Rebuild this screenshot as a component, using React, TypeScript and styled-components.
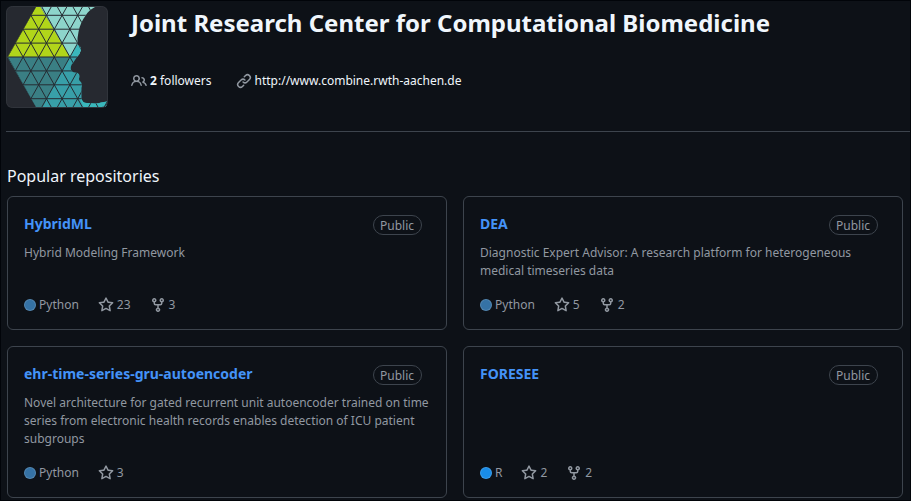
import React from "react";
import styled, { createGlobalStyle } from "styled-components";

const GlobalStyle = createGlobalStyle`
  *, *::before, *::after { box-sizing: border-box; }
  html { background: #0d1117; }
  body {
    margin: 0;
    background: #0d1117;
    color: #f0f6fc;
    font: 12px/18px "Noto Sans", sans-serif;
  }
`;

const Page = styled.main`
  min-height: 100vh;
  border: 1px solid #010409;
`;

const Header = styled.header`
  display: flex;
  gap: 23px;
  margin-left: 5px;
  padding: 5px 0 23px;
  border-bottom: 1px solid #3d444d;
`;

const Avatar = styled.svg`
  flex: none;
  width: 102px;
  height: 102px;
  border-radius: 6px;
`;

const Identity = styled.div`
  display: flex;
  flex-direction: column;
  gap: 32px;
`;

const OrgName = styled.h1`
  margin: 0;
  font-size: 24px;
  line-height: 34px;
  font-weight: 700;
`;

const MetaList = styled.ul`
  display: flex;
  gap: 24px;
  margin: 0;
  padding: 0;
  list-style: none;
`;

const MetaLink = styled.a`
  display: flex;
  align-items: center;
  gap: 3px;
  color: inherit;
  text-decoration: none;
`;

const Icon = styled.svg`
  flex: none;
  width: 16px;
  height: 16px;
  fill: #9198a1;
`;

const Popular = styled.section`
  padding: 32px 7px 0 6px;
`;

const SectionTitle = styled.h2`
  margin: 0 0 8px;
  font-size: 16px;
  line-height: 24px;
  font-weight: 400;
`;

const RepoGrid = styled.div`
  display: grid;
  grid-template-columns: repeat(2, minmax(0, 1fr));
  gap: 16px;
`;

const Card = styled.article`
  display: flex;
  flex-direction: column;
  padding: 16px 16px 15px;
  border: 1px solid #3d444d;
  border-radius: 6px;
`;

const CardHead = styled.div`
  display: flex;
  justify-content: space-between;
  align-items: flex-start;
  padding-right: 8px;
`;

const RepoLink = styled.a`
  color: #4493f8;
  font-size: 14px;
  line-height: 22px;
  font-weight: 700;
  text-decoration: none;
`;

const Visibility = styled.span`
  margin-top: 2px;
  padding: 1px 7px 0 6px;
  border: 1px solid #3d444d;
  border-radius: 10px;
  color: #9198a1;
  line-height: 17px;
`;

const Description = styled.p`
  flex: 1;
  margin: 9px 0 16px;
  color: #9198a1;
`;

const Stats = styled.div`
  display: flex;
  gap: 19px;
  color: #9198a1;
`;

const Stat = styled.a`
  display: flex;
  align-items: center;
  gap: 3px;
  color: inherit;
  text-decoration: none;
`;

const Language = styled.span`
  display: flex;
  align-items: center;
  gap: 3px;
`;

const Dot = styled.span<{ $color: string }>`
  width: 12px;
  height: 12px;
  border: 1px solid rgba(255, 255, 255, 0.15);
  border-radius: 50%;
  background: ${(p) => p.$color};
`;

const paths = {
  people:
    "M2 5.5a3.5 3.5 0 1 1 5.898 2.549 5.508 5.508 0 0 1 3.034 4.084.75.75 0 1 1-1.482.235 4 4 0 0 0-7.9 0 .75.75 0 0 1-1.482-.236A5.507 5.507 0 0 1 3.102 8.05 3.493 3.493 0 0 1 2 5.5ZM11 4a3.001 3.001 0 0 1 2.22 5.018 5.01 5.01 0 0 1 2.56 3.012.749.749 0 0 1-.885.954.752.752 0 0 1-.549-.514 3.507 3.507 0 0 0-2.522-2.372.75.75 0 0 1-.574-.73v-.352a.75.75 0 0 1 .416-.672A1.5 1.5 0 0 0 11 5.5.75.75 0 0 1 11 4Zm-5.5-.5a2 2 0 1 0-.001 3.999A2 2 0 0 0 5.5 3.5Z",
  link: "m7.775 3.275 1.25-1.25a3.5 3.5 0 1 1 4.95 4.95l-2.5 2.5a3.5 3.5 0 0 1-4.95 0 .751.751 0 0 1 .018-1.042.751.751 0 0 1 1.042-.018 1.998 1.998 0 0 0 2.83 0l2.5-2.5a2.002 2.002 0 0 0-2.83-2.83l-1.25 1.25a.751.751 0 0 1-1.042-.018.751.751 0 0 1-.018-1.042Zm-4.69 9.64a1.998 1.998 0 0 0 2.83 0l1.25-1.25a.751.751 0 0 1 1.042.018.751.751 0 0 1 .018 1.042l-1.25 1.25a3.5 3.5 0 1 1-4.95-4.95l2.5-2.5a3.5 3.5 0 0 1 4.95 0 .751.751 0 0 1-.018 1.042.751.751 0 0 1-1.042.018 1.998 1.998 0 0 0-2.83 0l-2.5 2.5a1.998 1.998 0 0 0 0 2.83Z",
  star: "M8 .25a.75.75 0 0 1 .673.418l1.882 3.815 4.21.612a.75.75 0 0 1 .416 1.279l-3.046 2.97.719 4.192a.751.751 0 0 1-1.088.791L8 12.347l-3.766 1.98a.75.75 0 0 1-1.088-.79l.72-4.194L.818 6.374a.75.75 0 0 1 .416-1.28l4.21-.611L7.327.668A.75.75 0 0 1 8 .25Zm0 2.445L6.615 5.5a.75.75 0 0 1-.564.41l-3.097.45 2.24 2.184a.75.75 0 0 1 .216.664l-.528 3.084 2.769-1.456a.75.75 0 0 1 .698 0l2.77 1.456-.53-3.084a.75.75 0 0 1 .216-.664l2.24-2.183-3.096-.45a.75.75 0 0 1-.564-.41L8 2.694Z",
  fork: "M5 5.372v.878c0 .414.336.75.75.75h4.5a.75.75 0 0 0 .75-.75v-.878a2.25 2.25 0 1 1 1.5 0v.878a2.25 2.25 0 0 1-2.25 2.25h-1.5v2.128a2.251 2.251 0 1 1-1.5 0V8.5h-1.5A2.25 2.25 0 0 1 3.5 6.25v-.878a2.25 2.25 0 1 1 1.5 0ZM5 3.25a.75.75 0 1 0-1.5 0 .75.75 0 0 0 1.5 0Zm6.75.75a.75.75 0 1 0 0-1.5.75.75 0 0 0 0 1.5Zm-3 8.75a.75.75 0 1 0-1.5 0 .75.75 0 0 0 1.5 0Z",
};

const Octicon = ({ name }: { name: keyof typeof paths }) => (
  <Icon viewBox="0 0 16 16" aria-hidden="true">
    <path d={paths[name]} />
  </Icon>
);

const rows = [-3, -2, -1, 0, 1, 2, 3];
const diagonals = [-4, -3, -2, -1, 0, 1, 2, 3, 4, 5, 6, 7, 8, 9, 10];

const OrgAvatar = () => (
  <Avatar viewBox="0 0 102 102" role="img" aria-label="Organization avatar">
    <defs>
      <clipPath id="hexagon">
        <path d="M1.5 51 30 1H89Q83 4 80 9Q74 17 72.5 26Q71 32 71.5 39Q75 40 75 44Q74 48 71 51L67 57Q64 60 65 64Q67 67 70 66.5Q74 67 73.5 71Q72 74 75 76Q77 79 75.5 82L75.5 92Q76 97 81 97Q92 98 95 96.5L101 95.5V99L99 101H30Z" />
      </clipPath>
    </defs>
    <rect width="102" height="102" fill="#262930" />
    <g clipPath="url(#hexagon)">
      <path d="M0 51V0H34L64 51Z" fill="#b1d51a" />
      <path d="M34 0H102V51H64Z" fill="#8dd5cb" />
      <path d="M64 51 72 37H80V51Z" fill="#3ab7bb" />
      <path d="M0 51H102V102H0Z" fill="#389fa8" />
      <path d="M0 51H64L36 102H0Z" fill="#3a7f84" />
      <path d="M74 93H102V102H78Z" fill="#3ab7bb" />
      <g stroke="#252b32" strokeWidth="1">
        {rows.map((r) => (
          <path key={r} d={`M0 ${51 + r * 13.9}H${r < 0 ? 102 : 78}`} />
        ))}
        {diagonals.map((d) => (
          <path key={d} d={`M${1.5 + d * 15.6 - 31.2} ${51 + 55.6}l62.4 -111.2M${1.5 + d * 15.6 - 31.2} ${51 - 55.6}l62.4 111.2`} />
        ))}
      </g>
    </g>
    <rect x="0.5" y="0.5" width="101" height="101" rx="6" fill="none" stroke="#30343b" />
  </Avatar>
);

type Repo = {
  name: string;
  description?: string;
  language: string;
  color: string;
  stars: number;
  forks?: number;
};

const repos: Repo[] = [
  { name: "HybridML", description: "Hybrid Modeling Framework", language: "Python", color: "#3572a5", stars: 23, forks: 3 },
  {
    name: "DEA",
    description: "Diagnostic Expert Advisor: A research platform for heterogeneous medical timeseries data",
    language: "Python",
    color: "#3572a5",
    stars: 5,
    forks: 2,
  },
  {
    name: "ehr-time-series-gru-autoencoder",
    description:
      "Novel architecture for gated recurrent unit autoencoder trained on time series from electronic health records enables detection of ICU patient subgroups",
    language: "Python",
    color: "#3572a5",
    stars: 3,
  },
  { name: "FORESEE", language: "R", color: "#198ce7", stars: 2, forks: 2 },
];

const RepoCard = ({ repo }: { repo: Repo }) => (
  <Card>
    <CardHead>
      <RepoLink href="#">{repo.name}</RepoLink>
      <Visibility>Public</Visibility>
    </CardHead>
    <Description>{repo.description}</Description>
    <Stats>
      <Language>
        <Dot $color={repo.color} />
        {repo.language}
      </Language>
      <Stat href="#" aria-label={`${repo.stars} stars`}>
        <Octicon name="star" />
        {repo.stars}
      </Stat>
      {repo.forks !== undefined && (
        <Stat href="#" aria-label={`${repo.forks} forks`}>
          <Octicon name="fork" />
          {repo.forks}
        </Stat>
      )}
    </Stats>
  </Card>
);

export default function App() {
  return (
    <>
      <GlobalStyle />
      <Page>
        <Header>
          <OrgAvatar />
          <Identity>
            <OrgName>Joint Research Center for Computational Biomedicine</OrgName>
            <MetaList>
              <li>
                <MetaLink href="#">
                  <Octicon name="people" />
                  <span>
                    <b>2</b> followers
                  </span>
                </MetaLink>
              </li>
              <li>
                <MetaLink href="http://www.combine.rwth-aachen.de">
                  <Octicon name="link" />
                  http://www.combine.rwth-aachen.de
                </MetaLink>
              </li>
            </MetaList>
          </Identity>
        </Header>
        <Popular>
          <SectionTitle>Popular repositories</SectionTitle>
          <RepoGrid>
            {repos.map((repo) => (
              <RepoCard key={repo.name} repo={repo} />
            ))}
          </RepoGrid>
        </Popular>
      </Page>
    </>
  );
}
